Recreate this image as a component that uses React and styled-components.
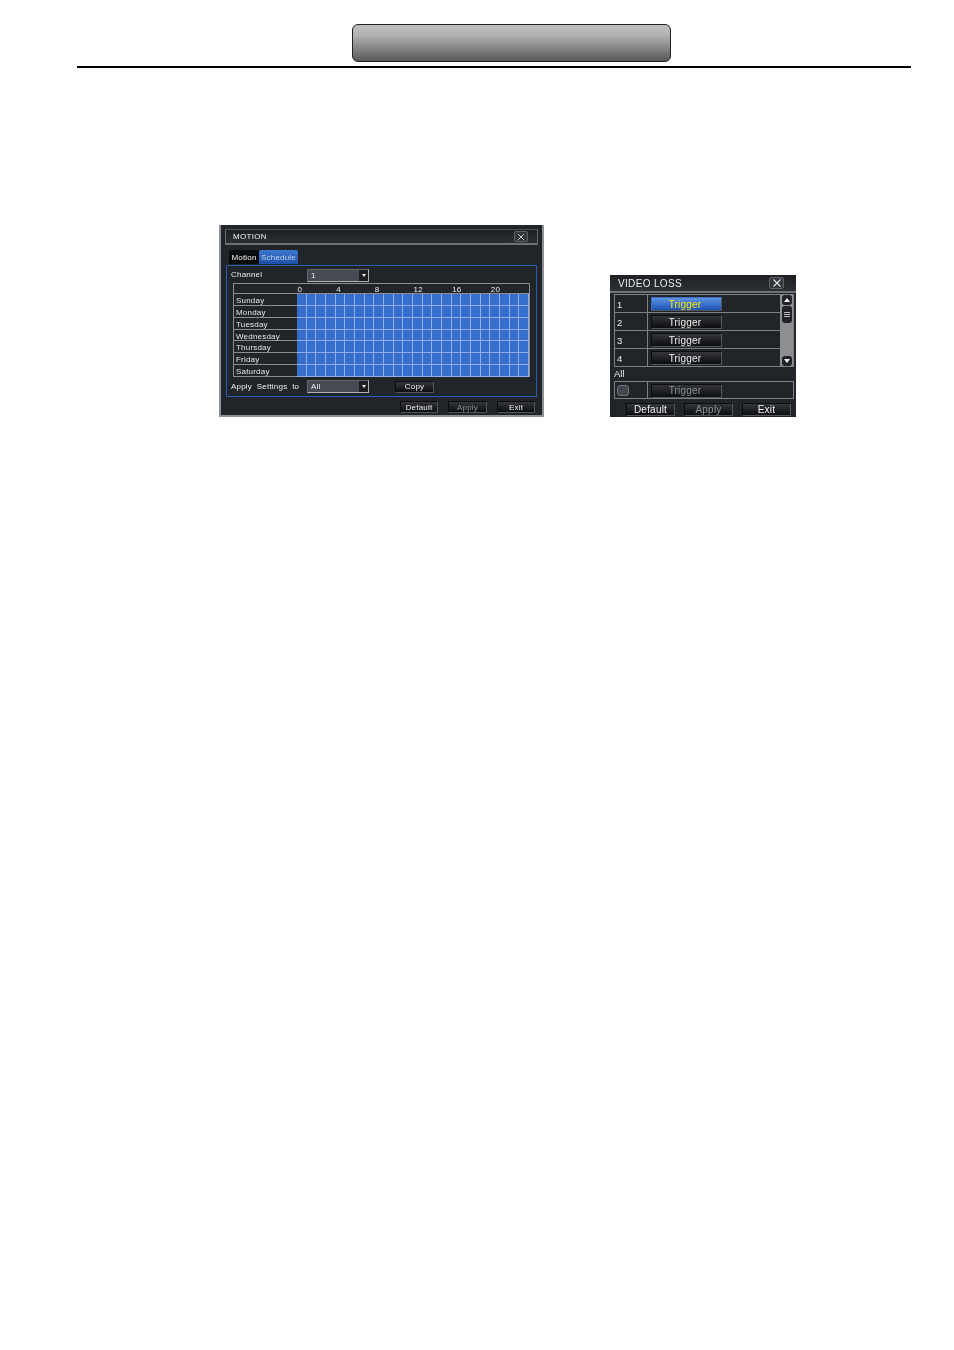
import React from "react";
import styled, { createGlobalStyle } from "styled-components";

const GlobalStyle = createGlobalStyle`
  html, body {
    margin: 0;
    padding: 0;
    background: #fff;
    font-family: "Liberation Sans", sans-serif;
  }
`;

const Page = styled.div`
  width: 954px;
  height: 1350px;
  box-sizing: border-box;
  padding: 24px 43px 0 77px;
  overflow: hidden;
`;

const Banner = styled.div`
  width: 319px;
  height: 38px;
  box-sizing: border-box;
  margin-left: 275px;
  border: 1.5px solid #222;
  border-radius: 6px;
  background: linear-gradient(#c0c0c0 0%, #b0b0b0 30%, #585858 100%);
`;

const Rule = styled.div`
  height: 2px;
  margin-top: 4px;
  background: #000;
`;

const Shots = styled.div`
  display: flex;
  align-items: flex-end;
  gap: 66px;
  margin: 157px 0 0 142px;
`;

const Shot = styled.div`
  width: ${(p) => p.$w}px;
  height: ${(p) => p.$h}px;
  box-sizing: border-box;
  background: #212429;
  color: #eceef0;
  filter: blur(0.35px);
  display: flex;
  flex-direction: column;
`;

const MotionShot = styled(Shot)`
  border: 2px solid #8d9094;
  border-top: 0;
  letter-spacing: 0.2px;
`;

const TitleBar = styled.div`
  height: ${(p) => p.$h}px;
  flex: none;
  display: flex;
  align-items: center;
  justify-content: space-between;
  box-sizing: border-box;
  padding: ${(p) => p.$pad};
  font-size: ${(p) => p.$size}px;
  letter-spacing: 0.33px;
  background: linear-gradient(#1e2024, #2c2f34);
  border-bottom: 2px solid #6e7175;
`;

const MotionTitle = styled(TitleBar)`
  border-left: 1px solid #666;
  border-right: 1px solid #666;
  border-top: 1px solid #4c4f54;
  margin: 4px 4px 0;
`;

const CloseBox = styled.div`
  width: ${(p) => p.$w}px;
  height: ${(p) => p.$h}px;
  display: flex;
  align-items: center;
  justify-content: center;
  background: #33363b;
  border: 1px solid #5f6368;
  box-sizing: border-box;
  border-radius: 2px;

  svg {
    display: block;
  }
`;

const Tabs = styled.div`
  display: flex;
  height: 14px;
  margin: 5px 0 0 8px;
`;

const Tab = styled.div`
  height: 14px;
  width: ${(p) => p.$w}px;
  display: flex;
  align-items: center;
  justify-content: center;
  font-size: 8px;
  border-radius: 2px 2px 0 0;
  color: ${(p) => (p.$on ? "#c8d6ea" : "#f0f0f0")};
  background: ${(p) => (p.$on ? "linear-gradient(#3c78d0, #1d50a8)" : "#0a0b0d")};
`;

const Panel = styled.div`
  width: 311px;
  height: 132px;
  box-sizing: border-box;
  margin: 1px 0 0 5px;
  border: 1px solid #2a5db0;
  padding: 3px 5px 0 4px;
  display: flex;
  flex-direction: column;
`;

const FormRow = styled.div`
  display: flex;
  align-items: center;
  height: ${(p) => p.$h}px;
  flex: none;
`;

const FormLabel = styled.div`
  width: 76px;
  font-size: 8px;
  word-spacing: 2.4px;
  white-space: nowrap;
  padding-bottom: ${(p) => p.$lift || 1}px;
`;

const Select = styled.div`
  width: 62px;
  height: 13px;
  box-sizing: border-box;
  display: flex;
  align-items: center;
  justify-content: space-between;
  padding-left: 3px;
  font-size: 8px;
  background: #474b54;
  border: 1px solid #aeb1b5;
  border-left-color: #666;
  border-top-color: #666;
`;

const SelectArrow = styled.div`
  width: 9px;
  height: 11px;
  display: flex;
  align-items: center;
  justify-content: center;
  background: #1c1e22;

  &::after {
    content: "";
    border-left: 2.5px solid transparent;
    border-right: 2.5px solid transparent;
    border-top: 3px solid #f2f2f2;
  }
`;

const Grid = styled.div`
  width: 297px;
  height: 94px;
  box-sizing: border-box;
  margin: 1px 0 0 2px;
  border: 1px solid #8b8e92;
  border-bottom: 0;
  display: grid;
  grid-template-columns: 63px repeat(24, minmax(0, 1fr));
  grid-template-rows: 10px repeat(7, minmax(0, 1fr));
`;

const HourCorner = styled.div`
  border-bottom: 1px solid #8b8e92;
`;

const Hour = styled.div`
  border-bottom: 1px solid #8b8e92;
  font-size: 8px;
  line-height: 11px;
  white-space: nowrap;
  padding-left: 0.5px;
`;

const Day = styled.div`
  border-bottom: 1px solid #8b8e92;
  font-size: 8px;
  line-height: 14px;
  padding-left: 2px;
  white-space: nowrap;
  color: #e4e6e8;
`;

const Cell = styled.div`
  background: #356ecb;
  border-right: 1px solid #8fb0e6;
  border-bottom: 1px solid #8fb0e6;
`;

const Btn = styled.div`
  width: ${(p) => p.$w}px;
  height: ${(p) => p.$h}px;
  flex: none;
  box-sizing: border-box;
  display: flex;
  align-items: center;
  justify-content: center;
  padding-right: ${(p) => p.$shift || 0}px;
  font-size: ${(p) => p.$size}px;
  letter-spacing: 0.2px;
  color: ${(p) => (p.$off ? "#8d9094" : p.$active ? "#f6e800" : "#eeeeee")};
  background: ${(p) =>
    p.$active
      ? "linear-gradient(#5d94e6, #1c52b4)"
      : "linear-gradient(#34363b, #0c0d0f)"};
  border: 1px solid ${(p) => (p.$active ? "#3b6fc4" : "#0b0c0e")};
  border-right-color: #53565b;
  border-bottom-color: #53565b;
  border-radius: 1px;
`;

const CopySlot = styled.div`
  margin-left: 26px;
`;

const Footer = styled.div`
  display: flex;
  gap: ${(p) => p.$gap}px;
  justify-content: flex-end;
  padding: ${(p) => p.$pad};
`;

const LossList = styled.div`
  display: flex;
  margin: 1px 2px 0 4px;
  height: 73px;
  border: 1px solid #7d8084;
  box-sizing: border-box;
`;

const LossRows = styled.div`
  flex: 1;
  display: flex;
  flex-direction: column;
`;

const LossRow = styled.div`
  flex: 1;
  display: flex;
  border-bottom: 1px solid #7d8084;

  &:last-child {
    border-bottom: 0;
  }
`;

const LossNum = styled.div`
  width: 33px;
  flex: none;
  box-sizing: border-box;
  display: flex;
  align-items: center;
  padding: 1px 0 0 2px;
  font-size: 9.5px;
  border-right: 1px solid #7d8084;
`;

const LossAction = styled.div`
  flex: 1;
  display: flex;
  align-items: center;
  padding: 1px 0 0 3px;
`;

const ScrollTrack = styled.div`
  width: 13px;
  flex: none;
  background: #8c8e90;
  display: flex;
  flex-direction: column;
  justify-content: space-between;
  align-items: center;
`;

const ScrollThumb = styled.div`
  width: 10px;
  height: ${(p) => p.$h}px;
  border-radius: 3px;
  background: #202226;
  display: flex;
  flex-direction: column;
  align-items: center;
  justify-content: center;
  gap: 1px;
`;

const ThumbLine = styled.div`
  width: 6px;
  height: 1px;
  background: #b9bbbe;
`;

const UpArrow = styled.div`
  border-left: 3px solid transparent;
  border-right: 3px solid transparent;
  border-bottom: 4px solid #eee;
`;

const DownArrow = styled.div`
  border-left: 3px solid transparent;
  border-right: 3px solid transparent;
  border-top: 4px solid #eee;
`;

const ScrollTop = styled.div`
  display: flex;
  flex-direction: column;
  align-items: center;
  gap: 1px;
`;

const AllLabel = styled.div`
  font-size: 9.5px;
  height: 14px;
  line-height: 13px;
  padding-left: 4px;
`;

const AllRow = styled.div`
  display: flex;
  height: 18px;
  box-sizing: border-box;
  margin: 0 2px 0 4px;
  border: 1px solid #7d8084;
`;

const CheckCell = styled.div`
  width: 33px;
  flex: none;
  box-sizing: border-box;
  display: flex;
  align-items: center;
  padding-left: 2px;
  border-right: 1px solid #7d8084;
`;

const CheckBox = styled.div`
  width: 12px;
  height: 11px;
  box-sizing: border-box;
  background: #44484e;
  border: 1px solid #6f7277;
  border-radius: 3px;
`;

const days = ["Sunday", "Monday", "Tuesday", "Wednesday", "Thursday", "Friday", "Saturday"];
const hours = Array.from({ length: 24 }, (_, i) => i);

const CloseIcon = ({ size }) => (
  <svg width={size} height={size} viewBox="0 0 10 10" fill="none" stroke="#e6e6e6" strokeWidth="1.1">
    <path d="M1.5 1.5 8.5 8.5M8.5 1.5 1.5 8.5" />
  </svg>
);

const App = () => (
  <Page>
    <GlobalStyle />
    <Banner />
    <Rule />
    <Shots>
      <MotionShot $w={325} $h={192}>
        <MotionTitle $h={16} $size={8} $pad="0 9px 0 7px">
          MOTION
          <CloseBox $w={14} $h={11}>
            <CloseIcon size={8} />
          </CloseBox>
        </MotionTitle>
        <Tabs>
          <Tab $w={30}>Motion</Tab>
          <Tab $w={39} $on>Schedule</Tab>
        </Tabs>
        <Panel>
          <FormRow $h={13}>
            <FormLabel $lift={3}>Channel</FormLabel>
            <Select>
              1
              <SelectArrow />
            </Select>
          </FormRow>
          <Grid>
            <HourCorner />
            {hours.map((h) => (
              <Hour key={h}>{h % 4 === 0 ? h : ""}</Hour>
            ))}
            {days.map((d) => (
              <React.Fragment key={d}>
                <Day>{d}</Day>
                {hours.map((h) => (
                  <Cell key={h} />
                ))}
              </React.Fragment>
            ))}
          </Grid>
          <FormRow $h={19}>
            <FormLabel>Apply Settings to</FormLabel>
            <Select>
              All
              <SelectArrow />
            </Select>
            <CopySlot>
              <Btn $w={39} $h={12} $size={8}>Copy</Btn>
            </CopySlot>
          </FormRow>
        </Panel>
        <Footer $gap={10} $pad="4px 7px 0 0">
          <Btn $w={38} $h={12} $size={8}>Default</Btn>
          <Btn $w={39} $h={12} $size={8} $off>Apply</Btn>
          <Btn $w={38} $h={12} $size={8}>Exit</Btn>
        </Footer>
      </MotionShot>

      <Shot $w={186} $h={142}>
        <TitleBar $h={18} $size={10} $pad="0 12px 0 8px">
          VIDEO LOSS
          <CloseBox $w={15} $h={12}>
            <CloseIcon size={10} />
          </CloseBox>
        </TitleBar>
        <LossList>
          <LossRows>
            {[1, 2, 3, 4].map((n) => (
              <LossRow key={n}>
                <LossNum>{n}</LossNum>
                <LossAction>
                  <Btn $w={71} $h={14} $size={10} $shift={3} $active={n === 1}>Trigger</Btn>
                </LossAction>
              </LossRow>
            ))}
          </LossRows>
          <ScrollTrack>
            <ScrollTop>
              <ScrollThumb $h={10}><UpArrow /></ScrollThumb>
              <ScrollThumb $h={17}><ThumbLine /><ThumbLine /><ThumbLine /></ScrollThumb>
            </ScrollTop>
            <ScrollThumb $h={10}><DownArrow /></ScrollThumb>
          </ScrollTrack>
        </LossList>
        <AllLabel>All</AllLabel>
        <AllRow>
          <CheckCell>
            <CheckBox />
          </CheckCell>
          <LossAction>
            <Btn $w={71} $h={14} $size={10} $shift={3} $off>Trigger</Btn>
          </LossAction>
        </AllRow>
        <Footer $gap={9} $pad="4px 5px 0 0">
          <Btn $w={49} $h={13} $size={10}>Default</Btn>
          <Btn $w={49} $h={13} $size={10} $off>Apply</Btn>
          <Btn $w={49} $h={13} $size={10}>Exit</Btn>
        </Footer>
      </Shot>
    </Shots>
  </Page>
);

export default App;
